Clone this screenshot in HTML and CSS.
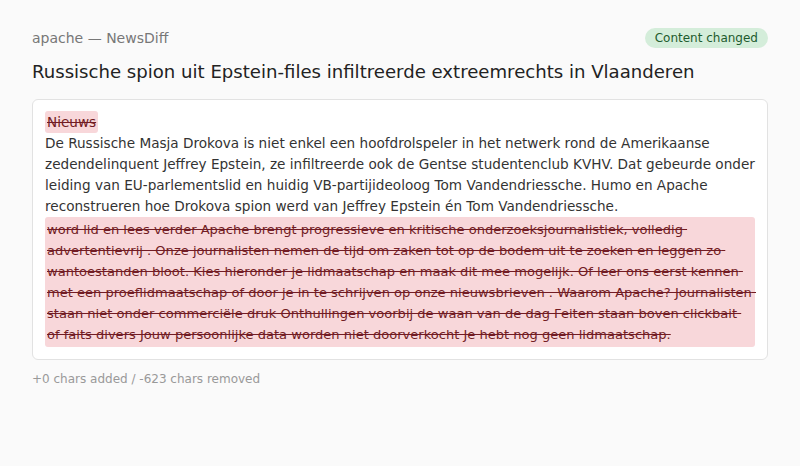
FILE: index.html
```html
<!DOCTYPE html>
<html lang="nl">
<head>
<meta charset="utf-8">
<title>apache — NewsDiff</title>
<link rel="stylesheet" href="styles.css">
</head>
<body>
<main class="page">
  <header class="top">
    <span class="source">apache — NewsDiff</span>
    <span class="badge">Content changed</span>
  </header>
  <h1 class="title">Russische spion uit Epstein-files infiltreerde extreemrechts in Vlaanderen</h1>
  <section class="card">
    <div class="diff"><del class="del-inline">Nieuws</del>
<span class="same">De Russische Masja Drokova is niet enkel een hoofdrolspeler in het netwerk rond de Amerikaanse zedendelinquent Jeffrey Epstein, ze infiltreerde ook de Gentse studentenclub KVHV. Dat gebeurde onder leiding van EU-parlementslid en huidig VB-partijideoloog Tom Vandendriessche. Humo en Apache reconstrueren hoe Drokova spion werd van Jeffrey Epstein én Tom Vandendriessche.</span><del class="del-block">word lid en lees verder Apache brengt progressieve en kritische onderzoeksjournalistiek, volledig advertentievrij . Onze journalisten nemen de tijd om zaken tot op de bodem uit te zoeken en leggen zo wantoestanden bloot. Kies hieronder je lidmaatschap en maak dit mee mogelijk. Of leer ons eerst kennen met een proeflidmaatschap of door je in te schrijven op onze nieuwsbrieven . Waarom Apache? Journalisten staan niet onder commerciële druk Onthullingen voorbij de waan van de dag Feiten staan boven clickbait of faits divers Jouw persoonlijke data worden niet doorverkocht Je hebt nog geen lidmaatschap.</del></div>
  </section>
  <p class="stats">+0 chars added / -623 chars removed</p>
</main>
</body>
</html>
```
FILE: styles.css
```css
html, body {
  margin: 0;
  padding: 0;
  background: #fafafa;
}
body {
  font-family: "DejaVu Sans", sans-serif;
  color: #222;
}
.page {
  padding: 28px 32px;
}
.top {
  display: flex;
  justify-content: space-between;
  align-items: center;
  height: 20px;
}
.source {
  font-size: 14px;
  color: #777;
}
.badge {
  font-size: 12px;
  color: #1e5b2e;
  background: #d4edda;
  border-radius: 10px;
  padding: 2px 10px;
  line-height: 16px;
}
.title {
  font-size: 18.1px;
  font-weight: normal;
  margin: 11px 0 14px;
  line-height: 26px;
  color: #222;
}
.card {
  background: #fff;
  border: 1px solid #e2e2e2;
  border-radius: 6px;
  padding: 12px;
}
.diff {
  white-space: pre-wrap;
  font-size: 13.6px;
  line-height: 21px;
  color: #333;
}
.del-inline {
  background: #f8d7da;
  color: #721c24;
  padding: 3px 2px;
  border-radius: 3px;
}
.del-block {
  display: block;
  background: #f8d7da;
  color: #721c24;
  font-size: 13.05px;
  padding: 2px 2px;
  border-radius: 3px;
}
.stats {
  font-size: 12px;
  color: #999;
  margin: 12px 0 0;
}
```
